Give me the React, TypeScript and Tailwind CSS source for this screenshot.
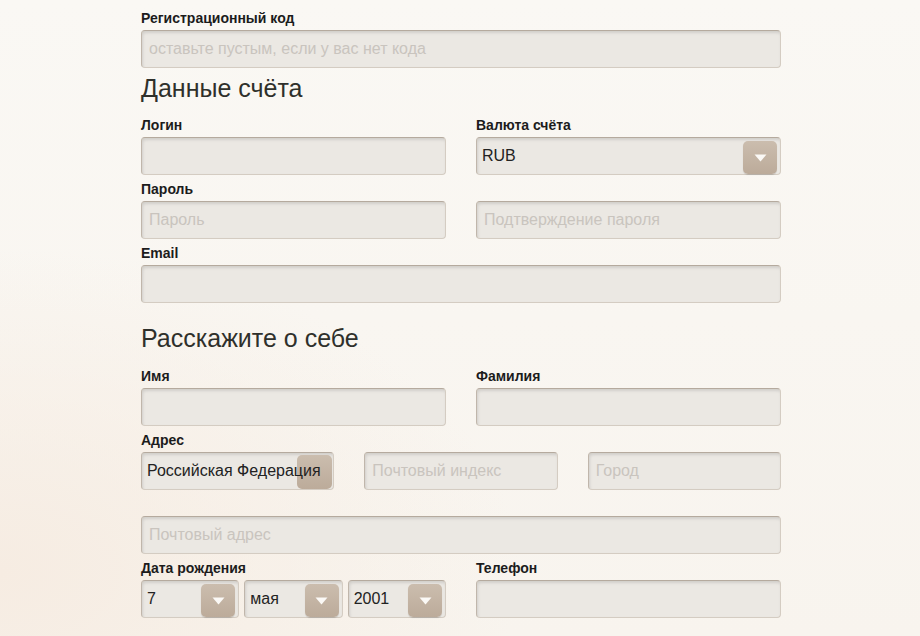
import type { ReactNode } from 'react'

const inputBase =
  'block w-full h-[38px] rounded-[4px] border border-[#d4ccc2] border-t-[#b5aa9e] border-l-[#c0b6ab] bg-[#ebe8e3] px-[7px] text-[16px] text-[#222] placeholder:text-[#c9c4be] shadow-[inset_1px_2px_3px_rgba(0,0,0,0.11)] outline-none'

function Label({ children }: { children?: ReactNode }) {
  return (
    <div className="h-[16px] mt-[6px] mb-[4px] text-[14px] leading-[16px] font-bold text-[#1c1c1c]">
      {children ?? '\u00a0'}
    </div>
  )
}

function Field({ placeholder }: { placeholder?: string }) {
  return <input className={inputBase} placeholder={placeholder} />
}

function Arrow() {
  return (
    <span className="absolute top-[3px] right-[3px] w-[34px] h-[33px] rounded-[5px] bg-gradient-to-b from-[#cbbdae] to-[#bcab9a] shadow-[0_1px_1px_rgba(0,0,0,0.15)] flex items-center justify-center">
      <svg width="13" height="8" viewBox="0 0 13 8">
        <path d="M0.5 0.5h12L6.5 7.5z" fill="#fbf9f6" />
      </svg>
    </span>
  )
}

function Select({ value, bare }: { value: string; bare?: boolean }) {
  return (
    <div className={inputBase + ' relative flex items-center !px-[5px]'}>
      {bare ? (
        <span className="absolute top-[2px] right-[1px] w-[35px] h-[34px] rounded-[5px] bg-gradient-to-b from-[#cbbdae] to-[#bcab9a]" />
      ) : (
        <Arrow />
      )}
      <span className="relative whitespace-nowrap">{value}</span>
    </div>
  )
}

function Heading({ children }: { children: ReactNode }) {
  return (
    <h2 className="text-[25px] leading-[28px] font-normal text-[#2f302b]">{children}</h2>
  )
}

export default function App() {
  return (
    <div
      className="min-h-[636px] w-full bg-[#f8f5f0] bg-[radial-gradient(ellipse_at_0%_90%,#f6ece2_0%,rgba(248,245,240,0)_40%),linear-gradient(#faf8f4,#f8f4ee)]"
      style={{ fontFamily: '"Liberation Sans", Arial, sans-serif' }}
    >
      <form className="w-[640px] ml-[141px] pt-[4px] pb-[18px]">
        <Label>Регистрационный код</Label>
        <Field placeholder="оставьте пустым, если у вас нет кода" />

        <div className="mt-[6px]">
          <Heading>Данные счёта</Heading>
        </div>

        <div className="grid grid-cols-2 gap-x-[30px] mt-[9px]">
          <div>
            <Label>Логин</Label>
            <Field />
          </div>
          <div>
            <Label>Валюта счёта</Label>
            <Select value="RUB" />
          </div>
        </div>

        <Label>Пароль</Label>
        <div className="grid grid-cols-2 gap-x-[30px]">
          <Field placeholder="Пароль" />
          <Field placeholder="Подтверждение пароля" />
        </div>

        <Label>Email</Label>
        <Field />

        <div className="mt-[21px]">
          <Heading>Расскажите о себе</Heading>
        </div>

        <div className="grid grid-cols-2 gap-x-[30px] mt-[10px]">
          <div>
            <Label>Имя</Label>
            <Field />
          </div>
          <div>
            <Label>Фамилия</Label>
            <Field />
          </div>
        </div>

        <Label>Адрес</Label>
        <div className="grid grid-cols-3 gap-x-[30px]">
          <Select value="Российская Федерация" bare />
          <Field placeholder="Почтовый индекс" />
          <Field placeholder="Город" />
        </div>

        <Label />
        <Field placeholder="Почтовый адрес" />

        <div className="grid grid-cols-2 gap-x-[30px]">
          <div>
            <Label>Дата рождения</Label>
            <div className="grid grid-cols-3 gap-x-[5px]">
              <Select value="7" />
              <Select value="мая" />
              <Select value="2001" />
            </div>
          </div>
          <div>
            <Label>Телефон</Label>
            <Field />
          </div>
        </div>
      </form>
    </div>
  )
}
